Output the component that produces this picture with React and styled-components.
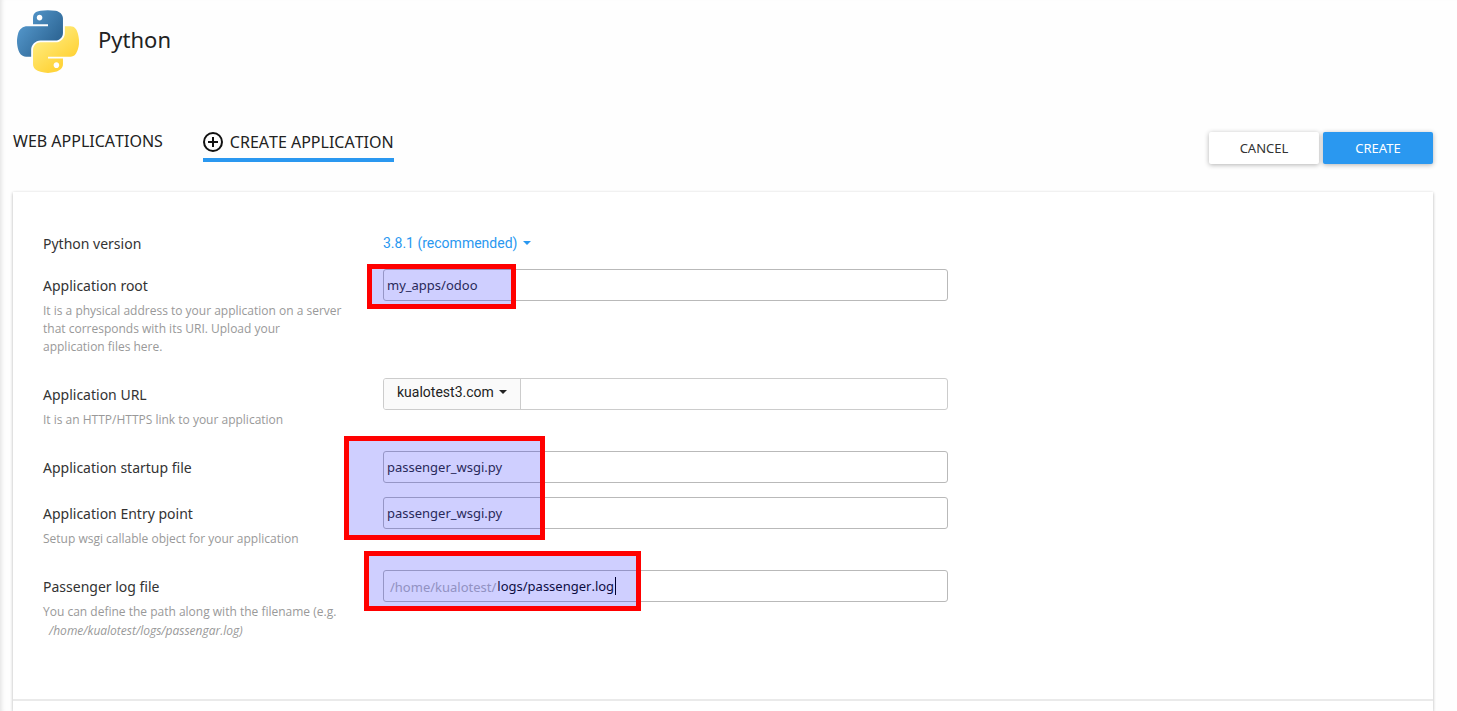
import React from "react";
import styled, { createGlobalStyle } from "styled-components";

const sans = `"Noto Sans", "Open Sans", sans-serif`;
const helpSans = `"Open Sans", "Noto Sans", sans-serif`;
const roboto = `Roboto, "Liberation Sans", sans-serif`;
const blue = "#2a98f0";

const GlobalStyle = createGlobalStyle`
  *, *::before, *::after { box-sizing: border-box; }
  html { min-height: 100%; display: flex; }
  body {
    flex: 1;
    margin: 0;
    background: #fefefe;
    box-shadow: inset 5px 0 5px -4px #ddd;
    color: #222;
    font: 14px/20px ${sans};
  }
`;

const Page = styled.div`
  padding: 9px 24px 0 13px;
`;

const Header = styled.header`
  display: flex;
  align-items: flex-start;
  gap: 19px;
  height: 65px;
  padding-left: 4px;
`;

const Title = styled.h1`
  margin: 0;
  padding-top: 15px;
  font-size: 22px;
  line-height: 30px;
  font-weight: 400;
`;

const Toolbar = styled.div`
  display: flex;
  align-items: flex-start;
  justify-content: space-between;
  margin-top: 54px;
`;

const Tabs = styled.nav`
  display: flex;
  align-items: flex-start;
  gap: 40px;
  padding-top: 4px;
`;

const Tab = styled.a`
  display: flex;
  align-items: center;
  gap: 7px;
  padding-bottom: ${(p) => (p.$active ? "6px" : "4px")};
  border-bottom: 4px solid ${(p) => (p.$active ? blue : "transparent")};
  color: #222;
  font-size: 16px;
  line-height: ${(p) => (p.$active ? "20px" : "18px")};
  font-kerning: none;
  text-decoration: none;
`;

const Actions = styled.div`
  display: flex;
  gap: 4px;
  padding-top: 4px;
`;

const Button = styled.button`
  width: 110px;
  height: 32px;
  padding: 0;
  border: 0;
  border-radius: 2px;
  background: ${(p) => (p.$primary ? blue : "#fff")};
  color: ${(p) => (p.$primary ? "#fff" : "#333")};
  box-shadow: 0 1px 5px rgba(0, 0, 0, 0.3);
  font: 13px/20px ${sans};
`;

const Panel = styled.form`
  margin-top: 28px;
  background: #fff;
  box-shadow: 0 1px 3px rgba(0, 0, 0, 0.3);
`;

const Fields = styled.div`
  padding: 35px 30px 58px;
`;

const Footer = styled.div`
  height: 12px;
  border-top: 2px solid #eaeaea;
`;

const Row = styled.div`
  display: grid;
  grid-template-columns: 340px minmax(0, 565px);
  margin-bottom: ${(p) => p.$gap || 0}px;
`;

const Label = styled.label`
  display: block;
  padding-top: 1px;
  color: #333;
  font-size: 14px;
  line-height: 32px;
`;

const Help = styled.p`
  margin: 0;
  padding-right: 40px;
  color: #999;
  font: 12px/18px ${helpSans};
`;

const Example = styled.em`
  display: block;
  padding-left: 6px;
  line-height: 20px;
`;

const Field = styled.div`
  position: relative;
  height: 32px;
`;

const TextInput = styled.input`
  width: 100%;
  height: 32px;
  padding: 0 3px;
  border: 1px solid #b9b9b9;
  border-radius: 3px;
  background: #fff;
  color: #333;
  font: 13px/20px ${sans};
  outline: 0;
`;

const Group = styled.div`
  display: flex;
  align-items: center;
  height: 32px;
  border: 1px solid ${(p) => (p.$light ? "#ccc" : "#b9b9b9")};
  border-radius: 3px;
  background: #fff;
  overflow: hidden;
`;

const BareInput = styled.input`
  flex: ${(p) => (p.$fit ? "none" : "1")};
  field-sizing: ${(p) => (p.$fit ? "content" : "fixed")};
  min-width: 0;
  height: 30px;
  padding: 0 1px;
  border: 0;
  background: transparent;
  color: #111;
  font: 13px/20px ${sans};
  font-kerning: none;
  outline: 0;
`;

const Prefix = styled.span`
  padding: 2px 0 0 6px;
  color: #b4b4b4;
  font: 13px/20px ${sans};
  font-kerning: none;
`;

const Cursor = styled.span`
  width: 1px;
  height: 18px;
  background: #000;
`;

const Picker = styled.div`
  display: flex;
  align-items: center;
  gap: 5px;
  height: ${(p) => (p.$boxed ? "30px" : "32px")};
  padding: ${(p) => (p.$boxed ? "0 13px 4px" : "0")};
  border-right: ${(p) => (p.$boxed ? "1px solid #ccc" : "0")};
  background: ${(p) => (p.$boxed ? "#fafafa" : "transparent")};
  color: ${(p) => (p.$boxed ? "#222" : blue)};
`;

const Select = styled.select`
  appearance: none;
  padding: 0;
  border: 0;
  background: transparent;
  color: inherit;
  font: 14px/20px ${roboto};
  outline: 0;
`;

const Highlight = styled.div`
  position: absolute;
  z-index: 1;
  left: ${(p) => p.$left}px;
  top: ${(p) => p.$top}px;
  width: ${(p) => p.$width}px;
  height: ${(p) => p.$height}px;
  border: 5px solid #f00;
  background: rgba(0, 0, 255, 0.19);
  background-clip: padding-box;
  pointer-events: none;
`;

const Caret = () => (
  <svg width="8" height="4" viewBox="0 0 8 4" fill="currentColor" aria-hidden="true">
    <path d="M0 0h8L4 4z" />
  </svg>
);

const PlusCircle = () => (
  <svg width="20" height="20" viewBox="0 0 20 20" fill="none" stroke="#111" strokeWidth="2" aria-hidden="true">
    <circle cx="10" cy="10" r="9" />
    <path d="M10 5v10M5 10h10" />
  </svg>
);

const PythonLogo = () => (
  <svg width="62" height="65" viewBox="0 -2 111 116" aria-hidden="true">
    <defs>
      <linearGradient id="snakeBlue" x1="0" y1="0.1" x2="0.8" y2="0.7">
        <stop offset="0" stopColor="#5a9fd4" />
        <stop offset="1" stopColor="#306998" />
      </linearGradient>
      <linearGradient id="snakeYellow" x1="0.25" y1="0.3" x2="0.62" y2="0.8">
        <stop offset="0" stopColor="#ffe873" />
        <stop offset="1" stopColor="#ffd43b" />
      </linearGradient>
    </defs>
    <path
      fill="url(#snakeBlue)"
      d="M54.919 0C50.335.022 45.958.413 42.106 1.095 30.76 3.099 28.7 7.295 28.7 15.032v10.219h26.813v3.406H18.638c-7.793 0-14.617 4.684-16.75 13.594-2.462 10.213-2.571 16.586 0 27.25 1.905 7.938 6.457 13.594 14.25 13.594h9.218v-12.25c0-8.85 7.657-16.657 16.75-16.657h26.782c7.455 0 13.406-6.138 13.406-13.625V15.032c0-7.266-6.13-12.725-13.406-13.937C64.282.328 59.502-.02 54.919 0zM40.419 8.22c2.769 0 5.031 2.298 5.031 5.125 0 2.816-2.262 5.093-5.031 5.093-2.78 0-5.031-2.277-5.031-5.093 0-2.827 2.251-5.125 5.031-5.125z"
    />
    <path
      fill="url(#snakeYellow)"
      d="M85.638 28.657v11.906c0 9.231-7.826 17-16.75 17H42.106c-7.336 0-13.406 6.279-13.406 13.625v25.532c0 7.266 6.319 11.54 13.406 13.625 8.487 2.495 16.626 2.946 26.782 0 6.75-1.955 13.406-5.888 13.406-13.625V86.501H55.513v-3.406H95.7c7.792 0 10.696-5.436 13.406-13.594 2.8-8.399 2.68-16.476 0-27.25-1.925-7.757-5.604-13.594-13.406-13.594H85.638zM70.575 93.313c2.78 0 5.031 2.278 5.031 5.094 0 2.827-2.251 5.125-5.031 5.125-2.769 0-5.031-2.298-5.031-5.125 0-2.816 2.262-5.094 5.031-5.094z"
    />
  </svg>
);

export default function App() {
  return (
    <>
      <GlobalStyle />
      <Page>
        <Header>
          <PythonLogo />
          <Title>Python</Title>
        </Header>
        <Toolbar>
          <Tabs>
            <Tab href="#applications">WEB APPLICATIONS</Tab>
            <Tab href="#create" $active>
              <PlusCircle />
              CREATE APPLICATION
            </Tab>
          </Tabs>
          <Actions>
            <Button type="button">CANCEL</Button>
            <Button type="submit" form="create-app" $primary>CREATE</Button>
          </Actions>
        </Toolbar>
        <Panel id="create-app" onSubmit={(e) => e.preventDefault()}>
          <Fields>
            <Row $gap={9}>
              <Label htmlFor="version">Python version</Label>
              <Picker>
                <Select id="version">
                  <option>3.8.1 (recommended)</option>
                </Select>
                <Caret />
              </Picker>
            </Row>
            <Row $gap={22}>
              <div>
                <Label htmlFor="root-dir">Application root</Label>
                <Help>
                  It is a physical address to your application on a server that
                  corresponds with its URI. Upload your application files here.
                </Help>
              </div>
              <Field>
                <TextInput id="root-dir" defaultValue="my_apps/odoo" />
                <Highlight $left={-16} $top={-5} $width={149} $height={45} />
              </Field>
            </Row>
            <Row $gap={22}>
              <div>
                <Label htmlFor="url">Application URL</Label>
                <Help>It is an HTTP/HTTPS link to your application</Help>
              </div>
              <Group $light>
                <Picker $boxed>
                  <Select aria-label="Domain">
                    <option>kualotest3.com</option>
                  </Select>
                  <Caret />
                </Picker>
                <BareInput id="url" />
              </Group>
            </Row>
            <Row $gap={13}>
              <Label htmlFor="startup">Application startup file</Label>
              <Field>
                <TextInput id="startup" defaultValue="passenger_wsgi.py" />
                <Highlight $left={-39} $top={-15} $width={201} $height={104} />
              </Field>
            </Row>
            <Row $gap={22}>
              <div>
                <Label htmlFor="entry">Application Entry point</Label>
                <Help>Setup wsgi callable object for your application</Help>
              </div>
              <TextInput id="entry" defaultValue="passenger_wsgi.py" />
            </Row>
            <Row>
              <div>
                <Label htmlFor="log">Passenger log file</Label>
                <Help>
                  You can define the path along with the filename (e.g.
                  <Example>/home/kualotest/logs/passengar.log)</Example>
                </Help>
              </div>
              <Field>
                <Group>
                  <Prefix>/home/kualotest/</Prefix>
                  <BareInput id="log" $fit defaultValue="logs/passenger.log" />
                  <Cursor />
                </Group>
                <Highlight $left={-19} $top={-19} $width={277} $height={60} />
              </Field>
            </Row>
          </Fields>
          <Footer />
        </Panel>
      </Page>
    </>
  );
}
